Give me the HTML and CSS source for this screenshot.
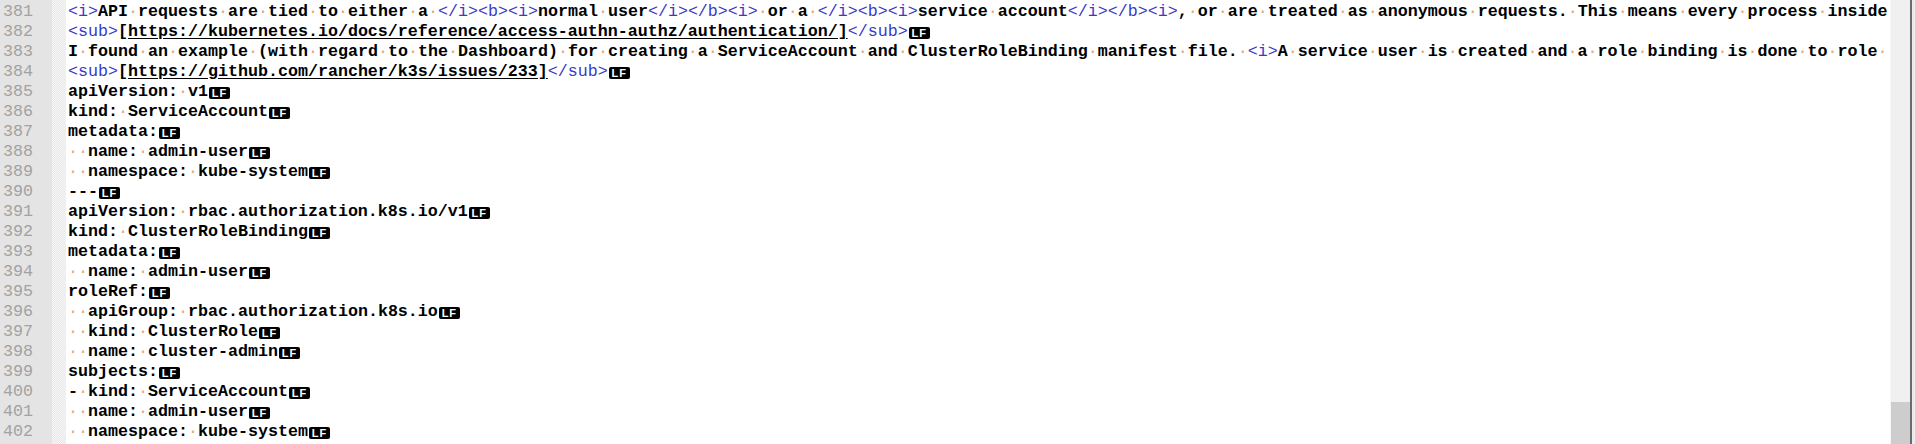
FILE: index.html
```html
<!DOCTYPE html>
<html lang="en">
<head>
    <meta charset="UTF-8">
    <meta name="viewport" content="width=device-width, initial-scale=1.0">
    <title>k3s-dashboard.md</title>
    <link rel="stylesheet" href="styles.css">
</head>
<body>

<div class="editor">
    <div class="gutter" id="gutter"></div>
    <div class="fold"></div>
    <div class="text" id="text"></div>
    <div class="vscroll">
        <div class="thumb"></div>
    </div>
    <div class="frame"></div>
</div>

<script>
    const firstLine = 381;

    // [text, ends with LF marker]
    const lines = [
        ['<i>API requests are tied to either a </i><b><i>normal user</i></b><i> or a </i><b><i>service account</i></b><i>, or are treated as anonymous requests. This means every process inside', false],
        ['<sub>[https://kubernetes.io/docs/reference/access-authn-authz/authentication/]</sub>', true],
        ['I found an example (with regard to the Dashboard) for creating a ServiceAccount and ClusterRoleBinding manifest file. <i>A service user is created and a role binding is done to role ', false],
        ['<sub>[https://github.com/rancher/k3s/issues/233]</sub>', true],
        ['apiVersion: v1', true],
        ['kind: ServiceAccount', true],
        ['metadata:', true],
        ['  name: admin-user', true],
        ['  namespace: kube-system', true],
        ['---', true],
        ['apiVersion: rbac.authorization.k8s.io/v1', true],
        ['kind: ClusterRoleBinding', true],
        ['metadata:', true],
        ['  name: admin-user', true],
        ['roleRef:', true],
        ['  apiGroup: rbac.authorization.k8s.io', true],
        ['  kind: ClusterRole', true],
        ['  name: cluster-admin', true],
        ['subjects:', true],
        ['- kind: ServiceAccount', true],
        ['  name: admin-user', true],
        ['  namespace: kube-system', true]
    ];

    function esc(s) {
        return s.replace(/&/g, '&amp;').replace(/</g, '&lt;').replace(/>/g, '&gt;');
    }

    function renderLine(s) {
        let out = '';
        let i = 0;
        while (i < s.length) {
            const ch = s[i];
            if (ch === '<') {
                const j = s.indexOf('>', i);
                out += '<span class="tag">' + esc(s.slice(i, j + 1)) + '</span>';
                i = j + 1;
            } else if (s.startsWith('https://', i)) {
                const j = s.indexOf(']', i);
                out += '<span class="url">' + esc(s.slice(i, j + 1)) + '</span>';
                i = j + 1;
            } else if (ch === ' ') {
                out += '<span class="ws">·</span>';
                i++;
            } else {
                out += esc(ch);
                i++;
            }
        }
        return out;
    }

    const gutter = document.getElementById('gutter');
    const text = document.getElementById('text');

    lines.forEach((line, n) => {
        const num = document.createElement('div');
        num.className = 'num';
        num.textContent = firstLine + n;
        gutter.appendChild(num);

        const row = document.createElement('div');
        row.className = 'line';
        row.innerHTML = renderLine(line[0]) + (line[1] ? '<span class="eol">LF</span>' : '');
        text.appendChild(row);
    });
</script>

</body>
</html>
```

FILE: styles.css
```css
html, body {
    margin: 0;
    padding: 0;
    background-color: #fff;
    overflow: hidden;
}
.editor {
    display: flex;
    height: 444px;
    width: 1915px;
    overflow: hidden;
    font-family: 'Liberation Mono', 'Courier New', monospace;
    font-size: 16.67px;
    line-height: 20px;
}
.gutter {
    width: 33px;
    padding: 2px 19px 0 0;
    background-color: #e4e4e4;
    color: #a2a2a2;
    text-align: right;
    flex-shrink: 0;
}
.fold {
    width: 14px;
    flex-shrink: 0;
    background: repeating-conic-gradient(#e6e6e6 0 25%, #f8f8f8 0 50%) 0 0 / 2px 2px;
}
.text {
    flex: 1;
    padding: 2px 3px 0 2px;
    overflow: hidden;
    white-space: pre;
    font-weight: bold;
    color: #000;
}
.line {
    height: 20px;
}
.tag {
    color: #3a3ac8;
    font-weight: normal;
}
.url {
    text-decoration: underline;
    text-underline-offset: 2px;
}
.ws {
    color: #e2a878;
    font-weight: normal;
}
.eol {
    display: inline-block;
    vertical-align: top;
    width: 21px;
    height: 12px;
    margin: 5px 0 0 1px;
    background-color: #000;
    color: #fff;
    border-radius: 2px;
    font-family: 'Liberation Sans', Arial, sans-serif;
    font-size: 11px;
    line-height: 12px;
    font-weight: bold;
    text-align: center;
    letter-spacing: 1px;
}
.vscroll {
    width: 19px;
    flex-shrink: 0;
    background-color: #f0f0f0;
    border-left: 1px solid #f6f6f6;
    display: flex;
    flex-direction: column;
    justify-content: flex-end;
}
.thumb {
    height: 42px;
    background-color: #cdcdcd;
}
.frame {
    width: 2px;
    flex-shrink: 0;
    background-color: #6b6b6b;
    border-right: 3px solid #ececec;
}
```
